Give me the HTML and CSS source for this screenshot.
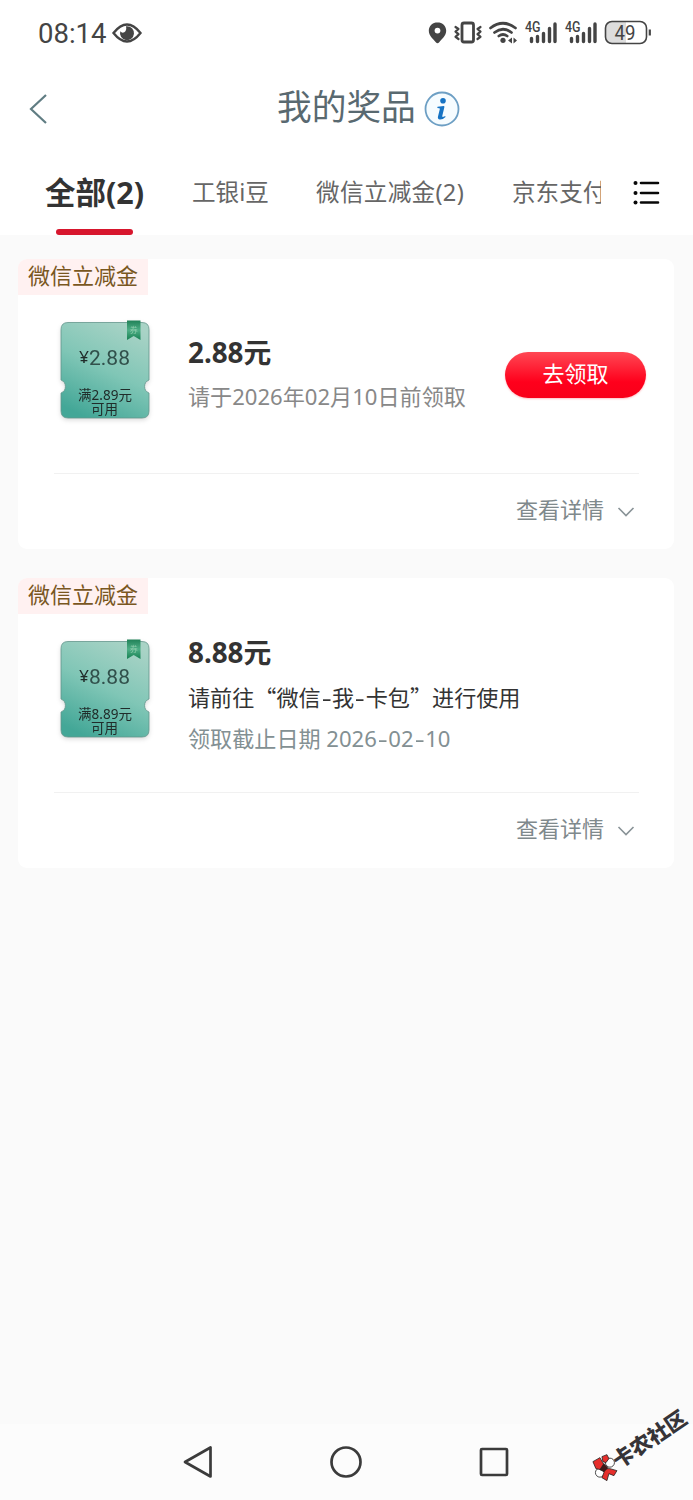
FILE: index.html
```html
<!DOCTYPE html>
<html lang="zh-CN">
<head>
<meta charset="utf-8">
<title>我的奖品</title>
<link rel="stylesheet" href="styles.css">
</head>
<body>
<svg class="defs" width="0" height="0" aria-hidden="true">
  <defs>
    <linearGradient id="mint" x1="0.75" y1="0" x2="0.3" y2="1">
      <stop offset="0" stop-color="#a9d3c6"/><stop offset="0.5" stop-color="#80c6b6"/><stop offset="1" stop-color="#43a797"/>
    </linearGradient>
    <linearGradient id="ribbon" x1="0" y1="0" x2="0" y2="1">
      <stop offset="0" stop-color="#218258"/><stop offset="0.5" stop-color="#4eae86"/><stop offset="1" stop-color="#168052"/>
    </linearGradient>
    <g id="coupon">
      <path d="M8 2.500H82Q89 2.500 89 9.500V60A7 7 0 0 0 89 73V91Q89 98 82 98H8Q1 98 1 91V73A7 7 0 0 0 1 60V9.500Q1 2.500 8 2.500Z" fill="url(#mint)" stroke="#63958c" stroke-width="0.800"/>
      <path d="M67 0.500H80.500V20L73.700 16L67 20Z" fill="url(#ribbon)"/>
      <text x="73.700" y="13" font-size="8" text-anchor="middle" class="seal">券</text>
    </g>
  </defs>
</svg>
<header class="status">
  <div class="clock"><span>08:14</span>
    <svg width="30" height="22" viewBox="0 0 30 22"><path d="M1.500 11Q15-6 28.500 11Q15 28 1.500 11Z" fill="none" stroke="#444" stroke-width="2.400"/><path d="M15 4.200A7 7 0 1 1 8.300 9.200Q10 11.500 12.300 10.200Q15 8.500 14 4.300Z" fill="#444"/></svg>
  </div>
  <svg class="signals" width="226" height="30" viewBox="427 18 226 30">
    <path d="M437.500 22.300c-5 0-8.700 3.700-8.700 8.500 0 5.200 4.500 8.200 7 11.500q1.700 2 3.400 0c2.500-3.300 7-6.300 7-11.500 0-4.800-3.700-8.500-8.700-8.500zm0 5.400a2.900 2.900 0 1 1 0 5.800 2.900 2.900 0 0 1 0-5.800z" fill="#444"/>
    <g fill="none" stroke="#444" stroke-linecap="round" stroke-linejoin="round">
      <rect x="462" y="23" width="11.500" height="19" rx="2" stroke-width="2.800"/>
      <path d="M455.500 27l3 2-3 2.600 3 2.600-3 2.600 3 2.200M480.500 27l-3 2 3 2.600-3 2.600 3 2.600-3 2.200" stroke-width="2.200"/>
      <path d="M490.500 28q12.500-9.500 25 0M494.500 32.500q8.500-6.500 17 0M498.800 36q4.200-3 8.400 0" stroke-width="2.700"/>
    </g>
    <g fill="#444">
      <circle cx="503" cy="40.300" r="2.600"/><path d="M512 37.500v6l-4-3zM513.500 37.500v6l3.500-3z"/>
    </g>
    <g id="cell">
      <text class="net" x="525" y="32" textLength="15.500" lengthAdjust="spacingAndGlyphs">4G</text>
      <path d="M531.500 38.500v3M537.500 36.500v5M543.500 33.500v8M549.500 28.500v13M555 24v17.500" stroke="#444" stroke-width="3.400" stroke-linecap="round"/>
    </g>
    <use href="#cell" x="40"/>
    <path d="M611 21.700h15v21.600h-15q-5.500 0-5.500-5.500V27q0-5.300 5.500-5.300z" fill="#ddd"/>
    <rect x="605.500" y="21.500" width="41" height="22" rx="6.500" fill="none" stroke="#444" stroke-width="1.600"/>
    <path d="M649.800 29.500v6" stroke="#444" stroke-width="2.200"/>
    <text class="charge" x="614.500" y="39.800" textLength="21" lengthAdjust="spacingAndGlyphs">49</text>
  </svg>
</header>
<div class="title-bar">
  <svg class="back" width="20" height="34" viewBox="0 0 20 34"><path d="M18 3L3 17L18 31" fill="none" stroke="#607d83" stroke-width="2.200"/></svg>
  <h1>我的奖品</h1>
  <svg class="info" width="36" height="36" viewBox="0 0 36 36"><circle cx="18" cy="18" r="16.500" fill="#f6fcff" stroke="#6d9fc4" stroke-width="1.800"/><circle cx="19" cy="9.700" r="2.800" fill="#1673c4"/><path d="M13.500 15.800L19.800 15Q20.600 15 20.300 16.400L18.200 25.200Q18 26.600 21.200 25L21.500 26Q18.500 28.800 15.800 28.500Q13.300 28.200 14 25.500L15.900 17.800Q16 17 13.300 17Z" fill="#1673c4"/></svg>
</div>
<nav class="tabs">
  <div class="strip">
    <span class="tab active">全部(2)</span>
    <span class="tab beans">工银i豆</span>
    <span class="tab wechat">微信立减金(2)</span>
    <span class="tab jd">京东支付</span>
  </div>
  <svg class="menu" width="27" height="26" viewBox="0 0 27 26"><path d="M8 3H25M8 13H25M8 22.500H25" stroke="#080808" stroke-width="2.600" stroke-linecap="round"/><g fill="#080808"><circle cx="2.500" cy="3" r="2"/><circle cx="2.500" cy="13" r="2"/><circle cx="2.500" cy="22.500" r="2"/></g></svg>
</nav>
<main class="prizes">
  <article class="card">
    <span class="tag">微信立减金</span>
    <div class="prize">
      <svg class="coupon" width="90" height="106" viewBox="0 0 90 106"><use href="#coupon"/>
        <text x="19" y="43" font-size="16" textLength="10" lengthAdjust="spacingAndGlyphs">¥</text><text class="amount" x="29" y="44.800" textLength="41">2.88</text>
        <text class="rule" x="18" y="80" textLength="54">满2.89元</text><text class="rule" x="31" y="93.500" textLength="27">可用</text>
      </svg>
      <div class="details claimable"><h2>2.88元</h2><p>请于2026年02月10日前领取</p></div>
      <button class="claim">去领取</button>
    </div>
    <div class="more"><span>查看详情</span><svg width="18" height="12" viewBox="0 0 18 12"><path d="M1.500 2L9 9.500L16.500 2" fill="none" stroke="#899397" stroke-width="1.600"/></svg></div>
  </article>
  <article class="card">
    <span class="tag">微信立减金</span>
    <div class="prize">
      <svg class="coupon" width="90" height="106" viewBox="0 0 90 106"><use href="#coupon"/>
        <text x="19" y="43" font-size="16" textLength="10" lengthAdjust="spacingAndGlyphs">¥</text><text class="amount" x="29" y="44.800" textLength="41">8.88</text>
        <text class="rule" x="18" y="80" textLength="54">满8.89元</text><text class="rule" x="31" y="93.500" textLength="27">可用</text>
      </svg>
      <div class="details"><h2>8.88元</h2><p class="usage">请前往<span class="quote">“</span>微信<span class="dash">-</span>我<span class="dash">-</span>卡包<span class="quote">”</span>进行使用</p><p class="deadline">领取截止日期 2026<span class="dash">-</span>02<span class="dash">-</span>10</p></div>
    </div>
    <div class="more"><span>查看详情</span><svg width="18" height="12" viewBox="0 0 18 12"><path d="M1.500 2L9 9.500L16.500 2" fill="none" stroke="#899397" stroke-width="1.600"/></svg></div>
  </article>
</main>
<footer class="navbar">
  <svg width="32" height="36" viewBox="0 0 32 36"><path d="M3 18L28.500 3.500V32.500Z"/></svg>
  <svg width="34" height="36" viewBox="0 0 34 36"><circle cx="17" cy="18" r="14.500"/></svg>
  <svg width="32" height="36" viewBox="0 0 32 36"><rect x="3" y="5" width="26" height="26" rx="1"/></svg>
</footer>
<div class="watermark">
  <svg width="28" height="30" viewBox="0 0 28 30"><g stroke="#222" stroke-width="0.800"><circle cx="19" cy="10" r="4.500" fill="#fff"/><circle cx="9" cy="20" r="4.500" fill="#fff"/><path d="M2 9L9 5L13 12L10 17L5 16ZM11 4L16 2L18 6L15 10L12 9ZM13 16L19 16L26 18L23 23L18 21L16 28L11 25L13 20Z" fill="#e62e2b"/><path d="M9 17L13 11L17 15L13 19Z" fill="#421818"/></g></svg>
  <span>卡农社区</span>
</div>
</body>
</html>
```
FILE: styles.css
```css
* { box-sizing: border-box; }
body { margin: 0; width: 693px; height: 1500px; display: flex; flex-direction: column; position: relative; overflow: hidden; background: #fafafa; color: #333; font-family: "Noto Sans", "Noto Sans CJK SC", sans-serif; }
svg { display: block; flex: none; }
h1, h2, p { margin: 0; font-weight: 400; white-space: nowrap; }
.defs { position: absolute; }
.status { height: 66px; padding: 0 40px 0 38px; display: flex; justify-content: space-between; align-items: center; background: #fff; }
.clock { display: flex; align-items: center; gap: 4px; font: 400 27.500px/32px Roboto, sans-serif; color: #444; }
.clock span { width: 70px; padding-top: 2px; }
.net { font: 500 14.500px Roboto, sans-serif; fill: #444; }
.charge { font: 400 20.500px Roboto, sans-serif; fill: #444; }
.title-bar { height: 84px; padding-left: 28px; display: flex; align-items: center; background: #fff; }
.back { margin-top: 2px; }
h1 { margin: -3px 0 0 229px; width: 139px; font-size: 34.700px; line-height: 50px; color: #596970; }
.info { margin: 2px 0 0 8px; }
.tabs { height: 85px; display: flex; background: #fff; }
.strip { width: 601px; height: 85px; display: flex; overflow: hidden; flex: none; padding-left: 45px; }
.tab { flex: none; white-space: nowrap; font-size: 23.600px; line-height: 85px; color: #666; }
.active { position: relative; width: 147px; font-size: 30.500px; font-weight: 700; color: #333; }
.active::after { content: ""; position: absolute; left: 11px; top: 79px; width: 77px; height: 6px; border-radius: 3px; background: #d7162d; }
.beans { width: 124px; }
.wechat { width: 196px; letter-spacing: 0.300px; }
.menu { margin: 30px 0 0 32px; }
.prizes { flex: 1; padding: 24px 19px 0 18px; display: flex; flex-direction: column; gap: 29px; }
.card { height: 290px; display: flex; flex-direction: column; background: #fff; border-radius: 9px; }
.tag { width: 130px; height: 36px; padding-left: 10px; font-size: 22px; line-height: 33px; color: #79571f; background: #fff1f1; border-radius: 9px 0 0 0; white-space: nowrap; }
.prize { height: 179px; margin: 0 35px 0 36px; display: flex; border-bottom: 1px solid #f1f1f1; }
.coupon { margin: 25px 0 0 6px; filter: drop-shadow(0 2px 2px #0002); }
.coupon text { fill: #202c2a; }
.coupon .amount { font: 400 21px Roboto, sans-serif; fill: #31504b; }
.coupon .rule { font-size: 13.500px; }
.coupon .seal, .seal { fill: #8bcbaa; }
.details { width: 355px; flex: none; padding: 22px 0 0 38px; }
.claimable { padding-top: 41px; }
h2 { font-size: 27.800px; font-weight: 700; line-height: 32px; color: #333; }
.details p { font-size: 22.100px; line-height: 32px; color: #888; }
.claimable p { margin-top: 12px; }
.details .usage { margin-top: 12px; color: #333; }
.details .deadline { margin-top: 9px; color: #839093; }
.quote { font-family: "Noto Sans CJK SC", sans-serif; }
.dash { display: inline-block; width: 11.500px; line-height: 20px; text-align: center; transform: scaleX(1.400); }
.claim { width: 141px; height: 46px; margin: 57px 0 0; padding: 0 0 4px; border: 0; border-radius: 23px; background: linear-gradient(#ff4854, #ff001c 65%, #f80019); box-shadow: 0 1px 2px #ff001c40; color: #fff; font: 22px/40px "Noto Sans", "Noto Sans CJK SC", sans-serif; flex: none; }
.more { height: 69px; padding-right: 39px; display: flex; justify-content: flex-end; align-items: center; gap: 13px; font-size: 22px; line-height: 32px; color: #7f898c; }
.more svg { margin-top: 6px; }
.navbar { height: 76px; padding: 0 183px 0 182px; display: flex; align-items: center; justify-content: space-between; background: #fcfcfc; }
.navbar svg { fill: none; stroke: #3b3b3b; stroke-width: 2.700; stroke-linejoin: round; }
.watermark { position: absolute; left: 584px; top: 1430px; display: flex; align-items: center; transform: rotate(-34deg); color: #363438; font-size: 21px; font-weight: 900; line-height: 30px; white-space: nowrap; font-family: "Noto Sans CJK SC", sans-serif; }
.watermark svg { margin-right: -3px; transform: rotate(34deg); }
```
